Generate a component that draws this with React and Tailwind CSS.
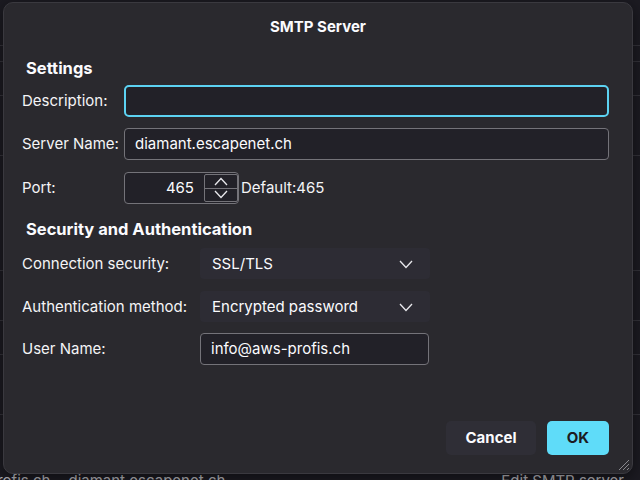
import React from "react";

const font = { fontFamily: "Inter, 'Liberation Sans', sans-serif" };

function Chevron({ up = false, className = "" }) {
  return (
    <svg width="14" height="9" viewBox="0 0 14 9" className={className} fill="none">
      {up ? (
        <path d="M1 8 L7 1.5 L13 8" stroke="#e8e8ec" strokeWidth="1.3" />
      ) : (
        <path d="M1 1 L7 7.5 L13 1" stroke="#e8e8ec" strokeWidth="1.3" />
      )}
    </svg>
  );
}

export default function App() {
  return (
    <div className="relative w-[640px] h-[480px] overflow-hidden bg-[#1c1b22]" style={font}>
      {/* background window content */}
      <div className="absolute inset-0 flex flex-col">
        <div className="h-[46px] border-b border-[#34333a]" />
        <div className="h-[16px] border-b border-[#34333a]" />
        <div className="h-[34px] border-b border-[#34333a]" />
        <div className="h-[60px] border-b border-[#34333a]" />
        <div className="h-[115px] border-b border-[#34333a]" />
        <div className="h-[50px] border-b border-[#34333a]" />
        <div className="h-[34px] border-b border-[#34333a]" />
        <div className="h-[60px] border-b border-[#34333a]" />
      </div>
      <div className="absolute left-0 top-[472px] w-[640px] flex items-start text-[15px] leading-[18px] text-[#b9b8be]">
        <span className="ml-[-12px]">profis.ch</span>
        <span className="ml-[18px]">diamant.escapenet.ch</span>
        <span className="ml-auto mr-[16px]">Edit SMTP server</span>
      </div>

      {/* dialog */}
      <div className="absolute left-[3px] top-[2px] w-[630px] h-[472px] rounded-[10px] bg-[#2a292e] border border-[#3a393f] flex flex-col shadow-[0_4px_16px_rgba(0,0,0,0.5)]">
        <div className="h-[49px] flex items-center justify-center text-[15px] font-bold text-[#fbfbfe]">
          SMTP Server
        </div>
        <div className="pl-[21px] pr-[23px]">
          <div className="mt-[1px] h-[30px] flex items-center text-[16.5px] font-bold text-[#fbfbfe] pl-[1px]">Settings</div>
          <div className="mt-[2px] h-[32px] flex items-center">
            <div className="w-[102px] shrink-0 text-[15px] text-[#f4f4f6] ml-[-3px] pt-[1px]">Description:</div>
            <div className="flex-1 h-[32px] rounded-[5px] bg-[#222128] border-2 border-[#5cd2f2]" />
          </div>
          <div className="mt-[11px] h-[32px] flex items-center">
            <div className="w-[102px] shrink-0 text-[15px] text-[#f4f4f6] ml-[-3px] pt-[1px]">Server Name:</div>
            <div className="flex-1 h-[32px] rounded-[4px] bg-[#222128] border border-[#747379] flex items-center px-[10px] pt-[1px] text-[15px] text-[#fbfbfe]">
              diamant.escapenet.ch
            </div>
          </div>
          <div className="mt-[12px] h-[32px] flex items-center">
            <div className="w-[102px] shrink-0 text-[15px] text-[#f4f4f6] ml-[-3px] pt-[1px]">Port:</div>
            <div className="w-[115px] h-[32px] rounded-[4px] bg-[#222128] border border-[#747379] flex items-center">
              <div className="w-[69px] text-right text-[15px] text-[#fbfbfe] pt-[1px]">465</div>
              <div className="ml-[10px] w-[34px] h-[28px] border border-[#747379] rounded-[2px] flex flex-col">
                <div className="flex-1 flex items-center justify-center border-b border-[#747379]">
                  <Chevron up />
                </div>
                <div className="flex-1 flex items-center justify-center">
                  <Chevron />
                </div>
              </div>
            </div>
            <div className="ml-[2px] text-[15px] text-[#f4f4f6] pt-[1px]">Default:465</div>
          </div>
          <div className="mt-[10px] h-[30px] flex items-center text-[16.5px] font-bold text-[#fbfbfe] pl-[1px] pt-[1px]">
            Security and Authentication
          </div>
          <div className="mt-[4px] h-[31px] flex items-center">
            <div className="w-[178px] shrink-0 text-[15px] text-[#f4f4f6] ml-[-3px] pt-[1px]">Connection security:</div>
            <div className="w-[230px] h-[31px] rounded-[4px] bg-[#2d2c34] flex items-center pl-[12px] pr-[17px] pt-[1px] text-[15px] text-[#fbfbfe]">
              <span className="flex-1">SSL/TLS</span>
              <Chevron />
            </div>
          </div>
          <div className="mt-[12px] h-[31px] flex items-center">
            <div className="w-[178px] shrink-0 text-[15px] text-[#f4f4f6] ml-[-3px] pt-[1px]">Authentication method:</div>
            <div className="w-[230px] h-[31px] rounded-[4px] bg-[#2d2c34] flex items-center pl-[12px] pr-[17px] pt-[1px] text-[15px] text-[#fbfbfe]">
              <span className="flex-1">Encrypted password</span>
              <Chevron />
            </div>
          </div>
          <div className="mt-[11px] h-[32px] flex items-center">
            <div className="w-[178px] shrink-0 text-[15px] text-[#f4f4f6] ml-[-3px] pt-[1px]">User Name:</div>
            <div className="w-[229px] h-[32px] rounded-[4px] bg-[#222128] border border-[#747379] flex items-center px-[10px] pt-[1px] text-[15px] text-[#fbfbfe]">
              info@aws-profis.ch
            </div>
          </div>
        </div>
        <div className="mt-auto mb-[18px] pr-[23px] flex justify-end gap-[11px]">
          <div className="w-[90px] h-[34px] rounded-[5px] bg-[#2f2e36] flex items-center justify-center pt-[1px] text-[15px] font-bold text-[#fbfbfe]">
            Cancel
          </div>
          <div className="w-[62px] h-[34px] rounded-[5px] bg-[#5fdcf9] flex items-center justify-center pt-[1px] text-[15px] font-bold text-[#1c1b22]">
            OK
          </div>
        </div>
        <svg className="absolute right-[2px] bottom-[2px]" width="14" height="14" viewBox="0 0 14 14">
          <path d="M13 3 L3 13 M13 7 L7 13 M13 11 L11 13" stroke="#8a898f" strokeWidth="1" />
        </svg>
      </div>
    </div>
  );
}
